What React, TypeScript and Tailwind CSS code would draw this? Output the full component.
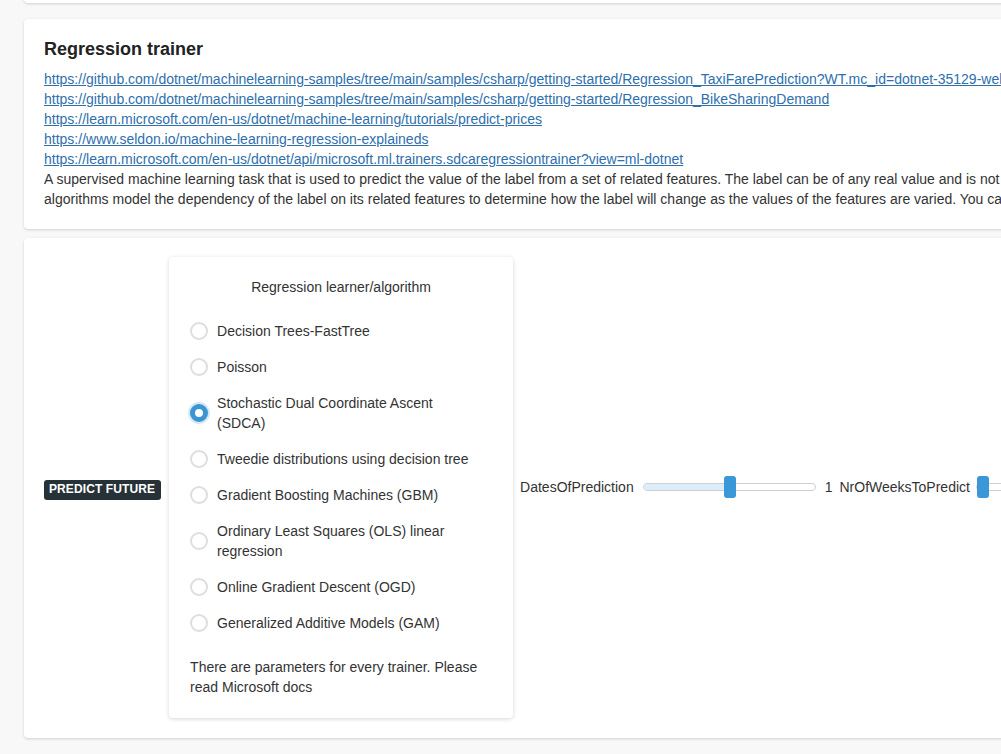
import React from "react";

const links = [
  "https://github.com/dotnet/machinelearning-samples/tree/main/samples/csharp/getting-started/Regression_TaxiFarePrediction?WT.mc_id=dotnet-35129-website",
  "https://github.com/dotnet/machinelearning-samples/tree/main/samples/csharp/getting-started/Regression_BikeSharingDemand",
  "https://learn.microsoft.com/en-us/dotnet/machine-learning/tutorials/predict-prices",
  "https://www.seldon.io/machine-learning-regression-explaineds",
  "https://learn.microsoft.com/en-us/dotnet/api/microsoft.ml.trainers.sdcaregressiontrainer?view=ml-dotnet",
];

const options = [
  "Decision Trees-FastTree",
  "Poisson",
  "Stochastic Dual Coordinate Ascent (SDCA)",
  "Tweedie distributions using decision tree",
  "Gradient Boosting Machines (GBM)",
  "Ordinary Least Squares (OLS) linear regression",
  "Online Gradient Descent (OGD)",
  "Generalized Additive Models (GAM)",
];

function Radio({ checked }: { checked: boolean }) {
  return checked ? (
    <span className="w-[18px] h-[18px] shrink-0 rounded-full bg-white border-[5px] border-[#3a95d2] shadow-[0_0_0_2px_rgba(58,149,210,0.22)]" />
  ) : (
    <span className="w-[18px] h-[18px] shrink-0 rounded-full bg-white border-2 border-[#dedede]" />
  );
}

export default function App() {
  return (
    <div
      className="w-[1001px] h-[754px] overflow-hidden bg-[#f8f8f8] text-[14px] text-[#333] leading-[20px]"
      style={{ fontFamily: '"Liberation Sans", Arial, sans-serif' }}
    >
      <div className="ml-6 w-[1300px] h-[60px] mt-[-57px] bg-white rounded-[4px] shadow-[0_1px_3px_rgba(0,0,0,0.16)]" />

      <div className="ml-6 mt-4 w-[1300px] bg-white rounded-[4px] shadow-[0_1px_3px_rgba(0,0,0,0.16)] px-5 pt-5 pb-5">
        <h2 className="text-[18px] leading-[21px] font-bold text-[#222] mb-[9px]">Regression trainer</h2>
        {links.map((l) => (
          <div key={l} className="whitespace-nowrap">
            <a href="#" className="text-[#2e6fae] underline">
              {l}
            </a>
          </div>
        ))}
        <div className="whitespace-nowrap">
          A supervised machine learning task that is used to predict the value of the label from a set of related features. The label can be of any real value and is not from a finite set of values as in classification tasks. Regression
        </div>
        <div className="whitespace-nowrap">
          algorithms model the dependency of the label on its related features to determine how the label will change as the values of the features are varied. You can read more about it in the docs.
        </div>
      </div>

      <div className="ml-6 mt-[9px] w-[1300px] bg-white rounded-[4px] shadow-[0_1px_3px_rgba(0,0,0,0.16)] px-5 pt-[19px] pb-5 flex items-center">
        <span className="bg-[#273238] text-white font-bold text-[12px] leading-[15px] pl-[5px] pr-[6px] pt-[2px] pb-[3px] rounded-[3px] mt-[5px] tracking-[0.1px]">
          PREDICT FUTURE
        </span>

        <div className="ml-2 w-[344px] shrink-0 bg-white rounded-[4px] shadow-[0_1px_4px_rgba(0,0,0,0.16)] px-[21px] pt-5 pb-[21px]">
          <div className="text-center">Regression learner/algorithm</div>
          <div className="mt-4">
            {options.map((o) => (
              <label key={o} className="flex items-center py-2">
                <Radio checked={o.startsWith("Stochastic")} />
                <span className="ml-[9px] max-w-[262px]">{o}</span>
              </label>
            ))}
          </div>
          <p className="mt-4">There are parameters for every trainer. Please read Microsoft docs</p>
        </div>

        <div className="ml-[7px] mb-[2px] flex items-center whitespace-nowrap">
          <span>DatesOfPrediction</span>
          <div className="relative ml-[9px] w-[173px] h-[8px] rounded-full border border-[#cfcfcf] bg-white">
            <div className="absolute left-0 top-0 bottom-0 w-[86px] rounded-l-full bg-[#dbedfa]" />
            <div className="absolute left-[80px] top-[-8px] w-[12px] h-[22px] rounded-[3px] bg-[#3a98d8]" />
          </div>
          <span className="ml-[9px]">1</span>
          <span className="ml-[7px]">NrOfWeeksToPredict</span>
          <div className="relative ml-[6px] w-[173px] h-[8px] rounded-full border border-[#cfcfcf] bg-white">
            <div className="absolute left-0 top-[-8px] w-[12px] h-[22px] rounded-[3px] bg-[#3a98d8]" />
          </div>
        </div>
      </div>
    </div>
  );
}
